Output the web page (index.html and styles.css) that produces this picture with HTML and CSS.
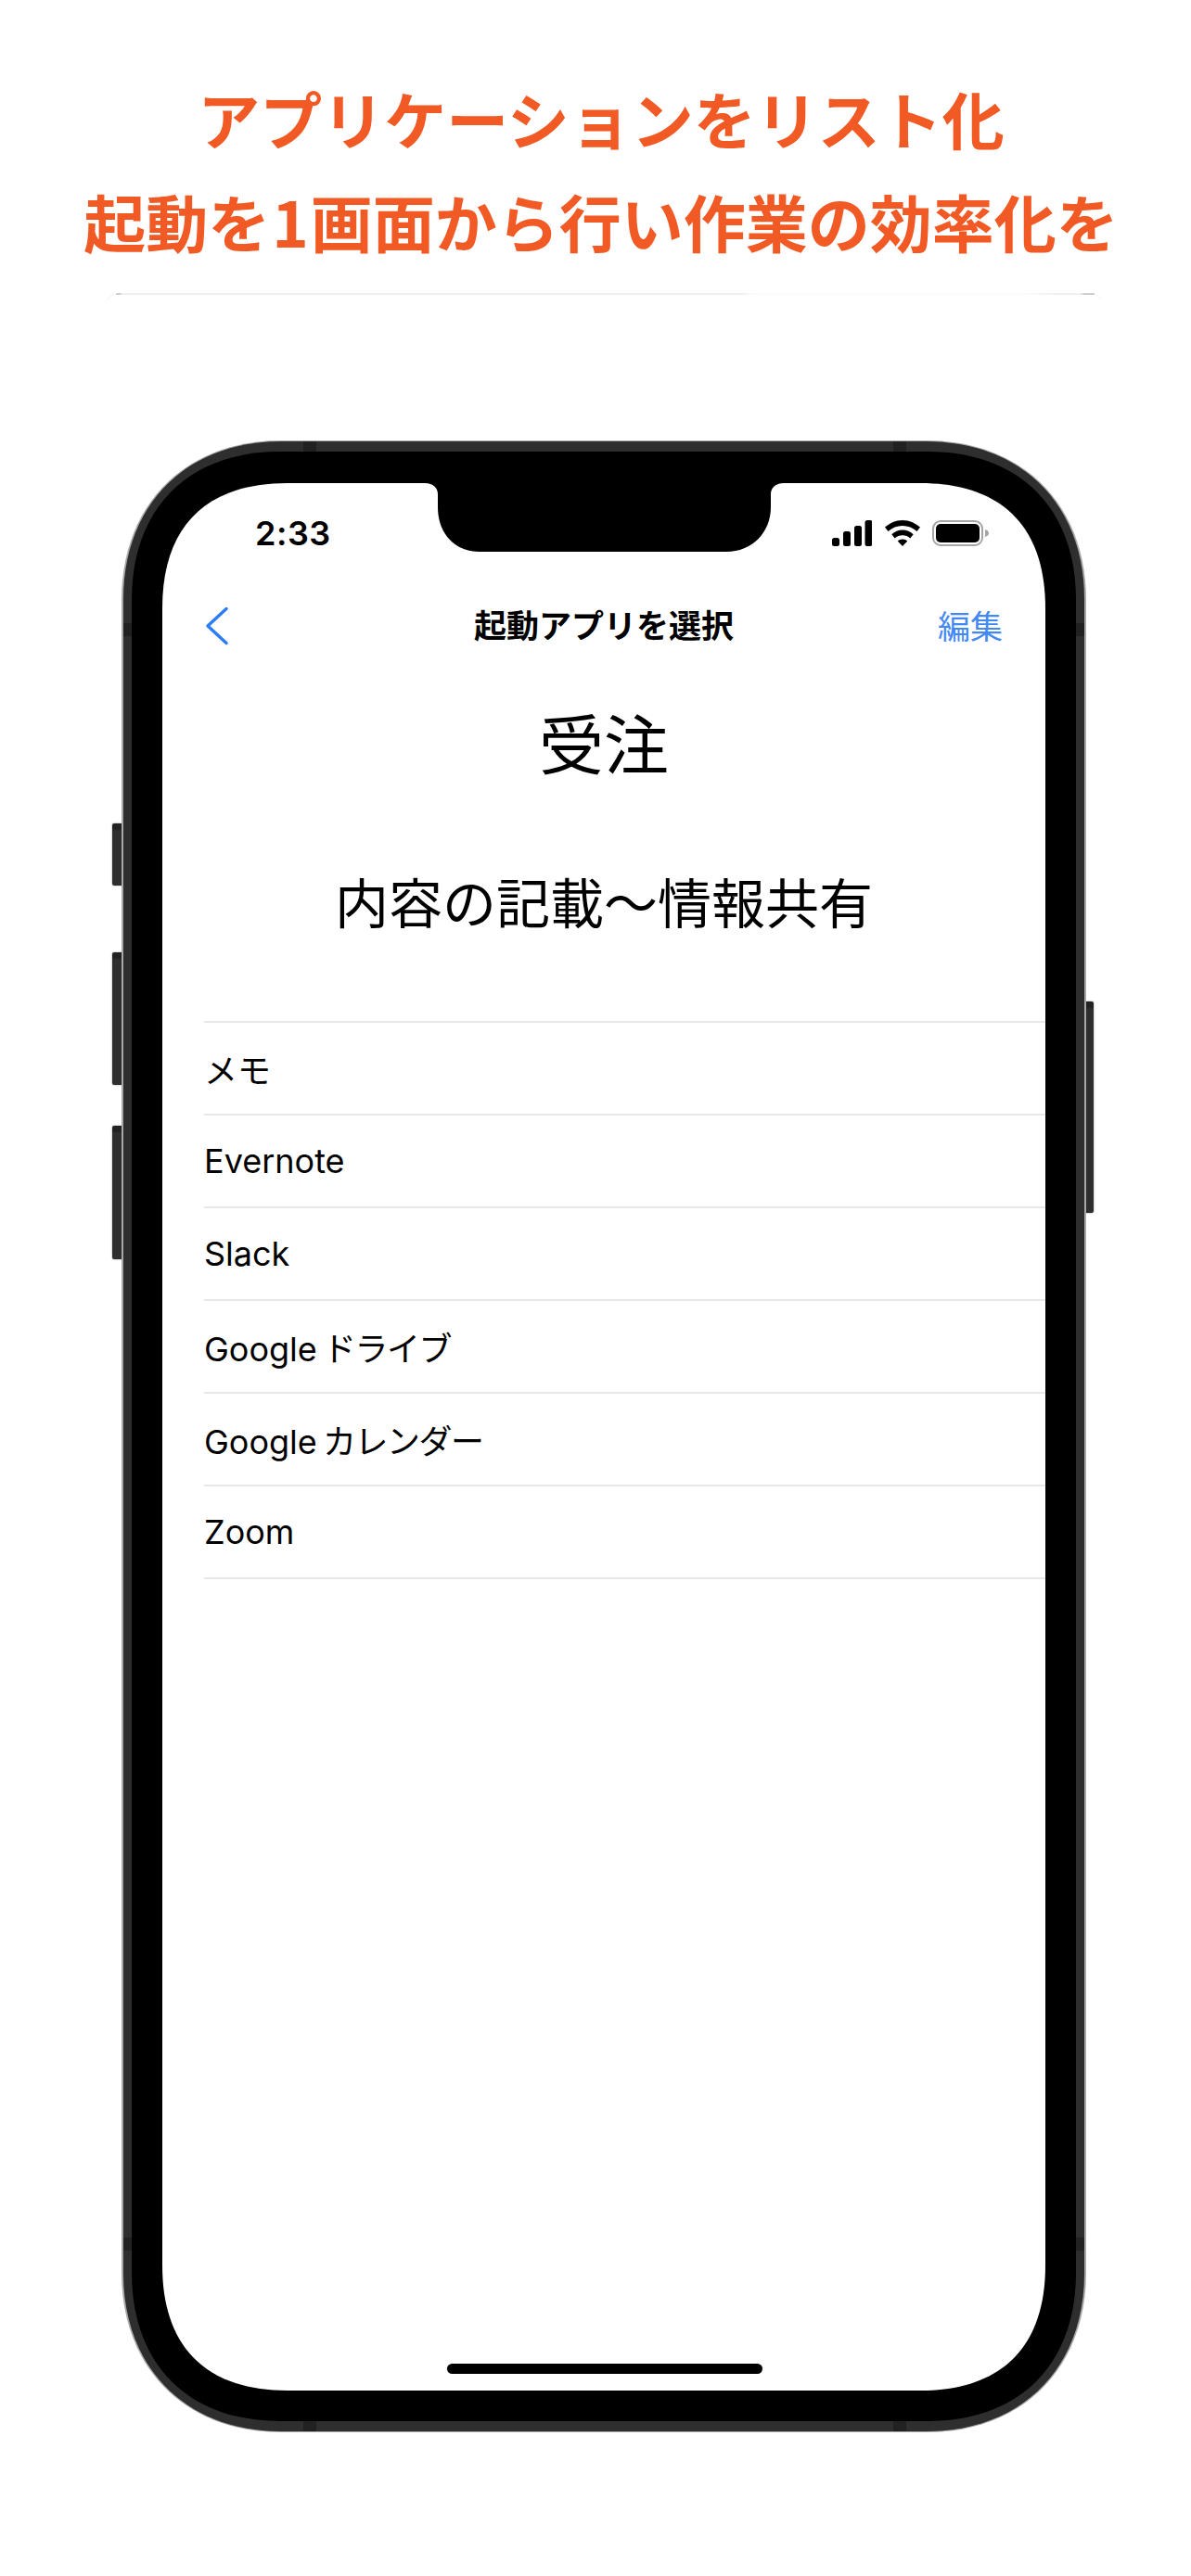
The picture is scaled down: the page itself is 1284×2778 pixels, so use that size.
FILE: index.html
```html
<!DOCTYPE html>
<html lang="ja">
<head>
<meta charset="utf-8">
<title>起動アプリを選択</title>
<link rel="stylesheet" href="styles.css">
</head>
<body>
<header class="promo">
  <h1 class="promo-title">アプリケーションをリスト化</h1>
  <h1 class="promo-title">起動を<span class="digit">1</span>画面から行い作業の効率化を</h1>
</header>
<div class="edge"></div>
<div class="phone">
  <span class="btn btn-mute"></span>
  <span class="btn btn-up"></span>
  <span class="btn btn-down"></span>
  <span class="btn btn-power"></span>
  <div class="rim">
    <div class="chassis">
      <span class="band band-tl"></span>
      <span class="band band-tr"></span>
      <span class="band band-bl"></span>
      <span class="band band-br"></span>
      <span class="band-v band-lt"></span>
      <span class="band-v band-rt"></span>
      <span class="band-v band-lb"></span>
      <span class="band-v band-rb"></span>
      <div class="bezel">
        <div class="screen">
          <svg class="notch" width="387" height="74" viewBox="0 0 387 74">
            <path d="M0 0H387C378 0 373 5 373 12V26C373 53 353 74 325 74H59C31 74 14 53 14 26V12C14 5 9 0 0 0Z" fill="#000"/>
          </svg>
          <div class="status">
            <span class="time">2:33</span>
            <div class="status-icons">
              <svg width="43" height="28" viewBox="0 0 43 28"><g fill="#000"><rect x="0" y="19" width="8" height="9" rx="2.500"/><rect x="12" y="12" width="8" height="16" rx="2.500"/><rect x="24" y="6" width="8" height="22" rx="2.500"/><rect x="35.500" y="0" width="8" height="28" rx="2.500"/></g></svg>
              <svg class="wifi" width="38" height="28" viewBox="0 0 38 28"><path d="M19 0C11.500 0 5.500 3 0 7.500L3.500 12C8 8 13 6 19 6S30 8 34.500 12L38 7.500C32.500 3 26.500 0 19 0ZM19 10.500C14.500 10.500 10.500 12.200 7.300 15.300L10.700 19.500C13 17.400 15.800 16.300 19 16.300S25 17.400 27.300 19.500L30.700 15.300C27.500 12.200 23.500 10.500 19 10.500ZM19 20.500C16.800 20.500 15 21.200 13.700 22.500L19 28L24.300 22.500C23 21.200 21.200 20.500 19 20.500Z" fill="#000"/></svg>
              <svg width="62" height="28" viewBox="0 0 62 28"><rect x="1" y="1" width="53" height="26" rx="8" fill="none" stroke="#a5a5a5" stroke-width="2"/><rect x="4" y="4" width="47" height="20" rx="5" fill="#000"/><path d="M57 10C59.500 10.800 61 12 61 14S59.500 17.200 57 18Z" fill="#a5a5a5"/></svg>
            </div>
          </div>
          <nav class="navbar">
            <svg class="back" width="26" height="42" viewBox="0 0 26 42"><path d="M23 2.500L3 21L23 39.500" fill="none" stroke="#2b7cf6" stroke-width="3.400" stroke-linecap="round" stroke-linejoin="round"/></svg>
            <span class="nav-title">起動アプリを選択</span>
            <span class="nav-edit">編集</span>
          </nav>
          <div class="group-title">受注</div>
          <div class="group-sub">内容の記載〜情報共有</div>
          <ul class="list">
            <li class="row">メモ</li>
            <li class="row">Evernote</li>
            <li class="row">Slack</li>
            <li class="row"><span>Google <span class="kana">ドライブ</span></span></li>
            <li class="row"><span>Google <span class="kana">カレンダー</span></span></li>
            <li class="row">Zoom</li>
          </ul>
          <span class="home"></span>
        </div>
      </div>
    </div>
  </div>
</div>
</body>
</html>
```
FILE: styles.css
```css
* { box-sizing: border-box; }
html, body { margin: 0; padding: 0; background: #fff; }
body {
  width: 1284px;
  height: 2778px;
  overflow: hidden;
  font-family: Inter, "Noto Sans CJK JP", sans-serif;
  color: #000;
}
.promo {
  height: 316px;
  padding: 87px 0 0 12px;
  display: flex;
  flex-direction: column;
  align-items: center;
  gap: 31px;
}
.promo-title {
  margin: 0;
  font-family: "Noto Sans CJK JP", sans-serif;
  font-size: 67px;
  line-height: 80px;
  font-weight: 700;
  color: #f15a24;
  white-space: nowrap;
}
.digit { margin: 0 2px; }
.edge {
  position: relative;
  width: 1055px;
  height: 2px;
  margin-left: 125px;
  background: linear-gradient(90deg, #cfcfcf 0, #cfcfcf 5px, #f0f0f0 6px, #f0f0f0 64%, #fbfbfb 65%, #fbfbfb 93%, #f0f0f0 96%, #f0f0f0 98.500%, #cfcfcf 99%);
}
.edge::before,
.edge::after {
  content: "";
  position: absolute;
  top: 3px;
  width: 11px;
  height: 1px;
  background: #f2f2f2;
}
.edge::before { left: -11px; transform: rotate(-40deg); }
.edge::after { right: -7px; width: 6px; transform: rotate(40deg); }
.phone {
  position: relative;
  width: 1040px;
  height: 2148px;
  margin: 157px 0 0 131px;
}
.rim {
  height: 100%;
  padding: 1px 2px;
  background: #a8a8a8;
  clip-path: path("M172 0H868C971 0 1040 69 1040 172V1976C1040 2079 971 2148 868 2148H172C69 2148 0 2079 0 1976V172C0 69 69 0 172 0Z");
}
.chassis {
  position: relative;
  height: 100%;
  padding: 11px 9px;
  background: #2e2e2e;
  clip-path: path("M170 0H866C968 0 1036 68 1036 170V1976C1036 2078 968 2146 866 2146H170C68 2146 0 2078 0 1976V170C0 68 68 0 170 0Z");
}
.bezel {
  height: 100%;
  padding: 34px 33px 33px;
  background: #000;
  clip-path: path("M160 0H858C957 0 1018 61 1018 160V1964C1018 2063 957 2124 858 2124H160C61 2124 0 2063 0 1964V160C0 61 61 0 160 0Z");
}
.screen {
  position: relative;
  height: 100%;
  background: #fff;
  clip-path: path("M135 0H817C905 0 952 47 952 135V1922C952 2010 905 2057 817 2057H135C47 2057 0 2010 0 1922V135C0 47 47 0 135 0Z");
}
.btn {
  position: absolute;
  width: 11px;
  background: linear-gradient(180deg, #222 0, #222 6px, #2e2e2e 8px);
  border-radius: 2px 0 0 2px;
  box-shadow: 0 0 2px #8a8a8a;
}
.btn-mute { left: -10px; top: 413px; height: 67px; }
.btn-up { left: -10px; top: 552px; height: 143px; }
.btn-down { left: -10px; top: 739px; height: 144px; }
.btn-power { right: -8px; top: 605px; width: 9px; height: 228px; border-radius: 0 2px 2px 0; }
.band { position: absolute; width: 14px; height: 11px; background: #212121; }
.band-tl { left: 194px; top: 0; }
.band-tr { right: 192px; top: 0; }
.band-bl { left: 194px; bottom: 0; }
.band-br { right: 192px; bottom: 0; }
.band-v { position: absolute; width: 9px; height: 14px; background: #212121; }
.band-lt { left: 0; top: 196px; }
.band-rt { right: 0; top: 196px; }
.band-lb { left: 0; bottom: 195px; }
.band-rb { right: 0; bottom: 195px; }
.notch { position: absolute; left: 283px; top: 0; }
.status {
  height: 108px;
  padding: 0 60px 0 100px;
  display: flex;
  justify-content: space-between;
  align-items: center;
}
.time { font-size: 36px; font-weight: 600; line-height: 44px; letter-spacing: 0.5px; }
.status-icons { display: flex; align-items: center; gap: 14px; }
.wifi { margin-right: -1px; }
.navbar {
  position: relative;
  height: 92px;
  display: flex;
  align-items: center;
  justify-content: center;
}
.back { position: absolute; left: 46px; top: 25px; }
.nav-title {
  padding-bottom: 6px;
  font-size: 35px;
  font-weight: 700;
  font-family: "Noto Sans CJK JP", sans-serif;
}
.nav-edit {
  position: absolute;
  right: 46px;
  top: 19px;
  font-size: 35px;
  color: #4289f3;
  font-family: "Noto Sans CJK JP", sans-serif;
}
.group-title {
  margin-top: 29px;
  text-align: center;
  font-size: 70px;
  line-height: 100px;
  font-family: "Noto Sans CJK JP", sans-serif;
  font-weight: 400;
}
.group-sub {
  margin-top: 79px;
  text-align: center;
  font-size: 58px;
  line-height: 84px;
  font-family: "Noto Sans CJK JP", sans-serif;
  font-weight: 400;
}
.list {
  list-style: none;
  margin: 88px 0 0 45px;
  padding: 0;
  border-top: 2px solid #e8e8ea;
}
.row {
  height: 100px;
  display: flex;
  align-items: center;
  font-size: 36px;
  word-spacing: -4px;
  border-bottom: 2px solid #e8e8ea;
}
.kana { letter-spacing: -1.5px; }
.home {
  position: absolute;
  left: 307px;
  bottom: 18px;
  width: 340px;
  height: 11px;
  background: #000;
  border-radius: 6px;
}
```
